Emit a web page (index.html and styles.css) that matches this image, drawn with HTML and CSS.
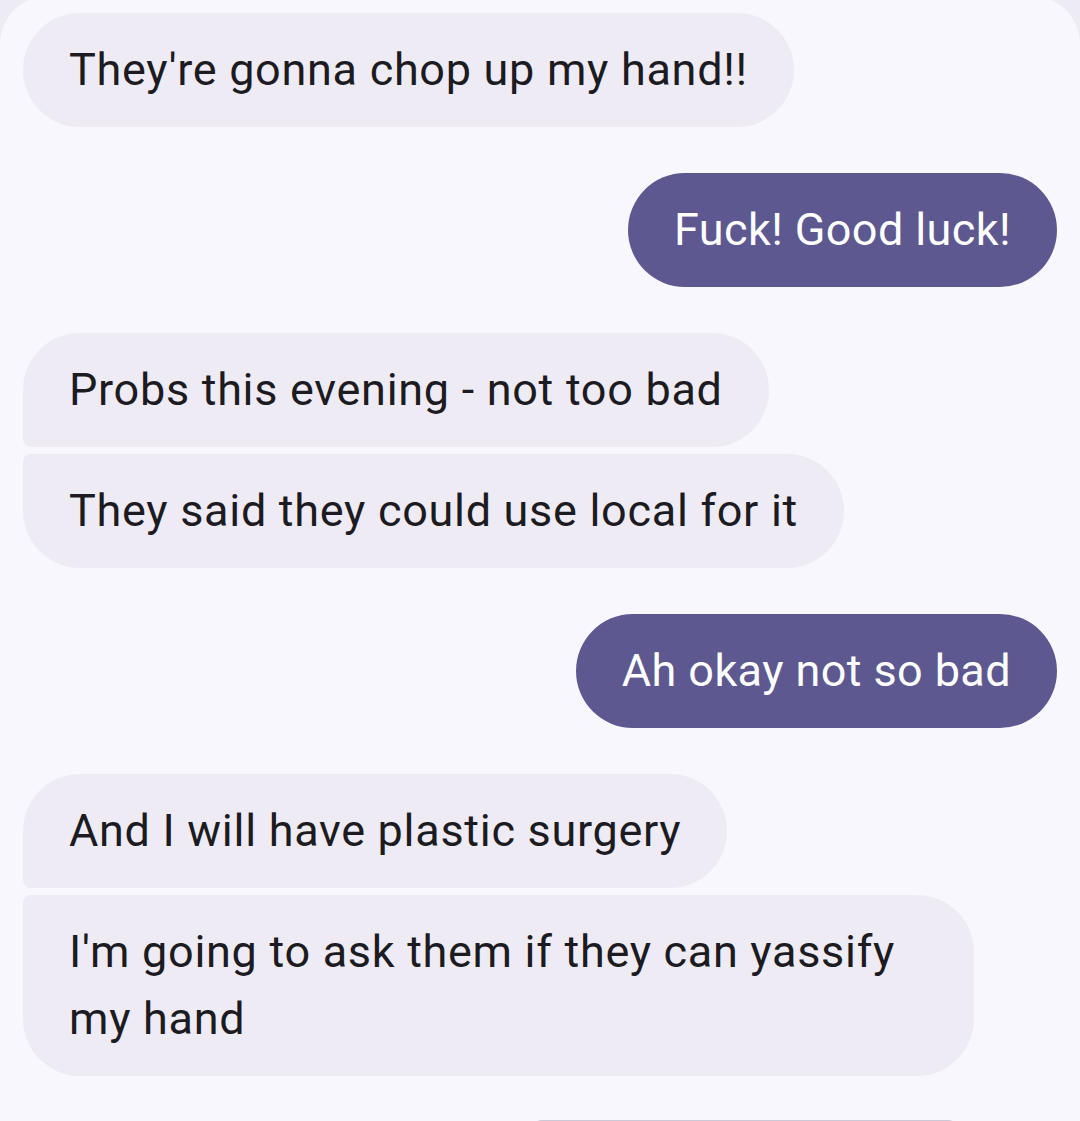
FILE: index.html
```html
<!DOCTYPE html>
<html lang="en">
<head>
    <meta charset="UTF-8">
    <meta name="viewport" content="width=device-width, initial-scale=1.0">
    <title>Messages</title>
    <link rel="stylesheet" href="styles.css">
</head>
<body>
    <main class="thread">
        <div class="group">
            <div class="bubble in">They're gonna chop up my hand!!</div>
        </div>

        <div class="group out-group">
            <div class="bubble out">Fuck! Good luck!</div>
        </div>

        <div class="group">
            <div class="bubble in first">Probs this evening - not too bad</div>
            <div class="bubble in last">They said they could use local for it</div>
        </div>

        <div class="group out-group">
            <div class="bubble out">Ah okay not so bad</div>
        </div>

        <div class="group">
            <div class="bubble in first">And I will have plastic surgery</div>
            <div class="bubble in last">I'm going to ask them if they can yassify my hand</div>
        </div>

        <!-- compose bar peeking in at the bottom -->
        <div class="compose"></div>
    </main>
</body>
</html>
```

FILE: styles.css
```css
html, body {
    margin: 0;
    padding: 0;
}
body {
    background-color: #edebf3;
    font-family: Roboto, "Noto Sans", sans-serif;
    overflow: hidden;
}
.thread {
    background-color: #f8f7fd;
    border-radius: 48px 48px 0 0;
    margin-top: -4px;
    padding: 17px 23px 0 23px;
    min-height: 1200px;
    display: flex;
    flex-direction: column;
    gap: 46px;
}
.group {
    display: flex;
    flex-direction: column;
    align-items: flex-start;
    gap: 7px;
}
.out-group {
    align-items: flex-end;
}
.bubble {
    font-size: 45px;
    line-height: 67px;
    padding: 23px 46px 24px 46px;
    border-radius: 57px;
    max-width: 859px;
}
.in {
    background-color: #eeebf5;
    color: #1c1b21;
    letter-spacing: 0.7px;
}
.out {
    background-color: #5d5890;
    color: #ffffff;
    letter-spacing: 0.4px;
}
.in.first {
    border-bottom-left-radius: 8px;
}
.in.last {
    border-top-left-radius: 8px;
}
.compose {
    align-self: flex-start;
    width: 430px;
    height: 20px;
    margin-left: 507px;
    margin-top: -2px;
    background-color: #cbc8d8;
    border-radius: 12px 12px 0 0;
}
```
